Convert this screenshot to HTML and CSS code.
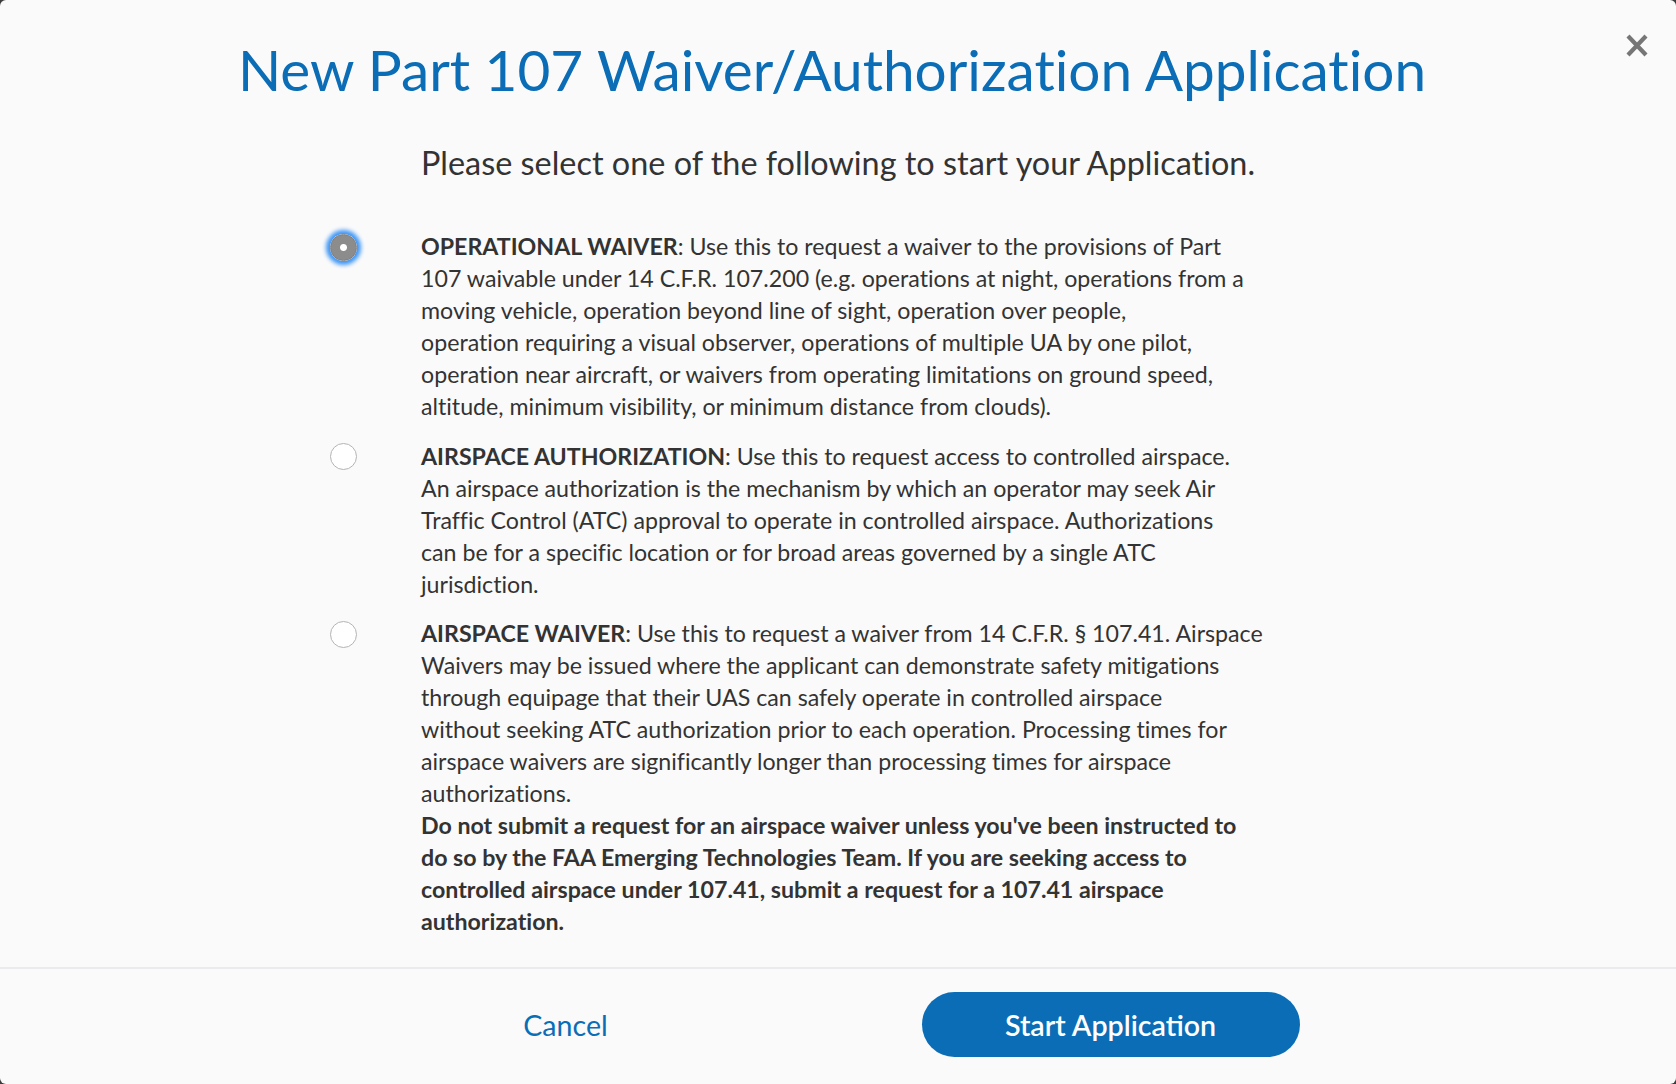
FILE: index.html
```html
<!DOCTYPE html>
<html lang="en">
<head>
    <meta charset="UTF-8">
    <title>New Part 107 Waiver/Authorization Application</title>
    <link rel="stylesheet" href="styles.css">
</head>
<body>
<div class="modal">
    <button class="close" aria-label="Close">
        <svg width="22" height="23" viewBox="0 0 22 23"><path d="M2 2 L20 21 M20 2 L2 21" stroke="#767676" stroke-width="4.2" fill="none"/></svg>
    </button>
    <div class="modal-body">
        <h1 class="title">New Part 107 Waiver/Authorization Application</h1>
        <p class="lead">Please select one of the following to start your Application.</p>

        <div class="options">
            <label class="option">
                <input type="radio" name="app-type" class="radio" checked>
                <span class="option-text"><b>OPERATIONAL WAIVER</b>: Use this to request a waiver to the provisions of Part<br>
                    107 waivable under 14 C.F.R. 107.200 (e.g. operations at night, operations from a<br>
                    moving vehicle, operation beyond line of sight, operation over people,<br>
                    operation requiring a visual observer, operations of multiple UA by one pilot,<br>
                    operation near aircraft, or waivers from operating limitations on ground speed,<br>
                    altitude, minimum visibility, or minimum distance from clouds).</span>
            </label>
            <label class="option">
                <input type="radio" name="app-type" class="radio">
                <span class="option-text"><b>AIRSPACE AUTHORIZATION</b>: Use this to request access to controlled airspace.<br>
                    An airspace authorization is the mechanism by which an operator may seek Air<br>
                    Traffic Control (ATC) approval to operate in controlled airspace. Authorizations<br>
                    can be for a specific location or for broad areas governed by a single ATC<br>
                    jurisdiction.</span>
            </label>
            <label class="option">
                <input type="radio" name="app-type" class="radio">
                <span class="option-text"><b>AIRSPACE WAIVER</b>: Use this to request a waiver from 14 C.F.R. § 107.41. Airspace<br>
                    Waivers may be issued where the applicant can demonstrate safety mitigations<br>
                    through equipage that their UAS can safely operate in controlled airspace<br>
                    without seeking ATC authorization prior to each operation. Processing times for<br>
                    airspace waivers are significantly longer than processing times for airspace<br>
                    authorizations.<br>
                    <b>Do not submit a request for an airspace waiver unless you've been instructed to<br>
                    do so by the FAA Emerging Technologies Team. If you are seeking access to<br>
                    controlled airspace under 107.41, submit a request for a 107.41 airspace<br>
                    authorization.</b></span>
            </label>
        </div>
    </div>
    <div class="modal-footer">
        <button class="btn btn-link">Cancel</button>
        <button class="btn btn-primary">Start Application</button>
    </div>
</div>
</body>
</html>
```

FILE: styles.css
```css
* { box-sizing: border-box; }
body {
    margin: 0;
    background: #3c3c3c;
    font-family: 'Lato', sans-serif;
    font-variant-ligatures: none;
    color: #333;
}
.modal {
    height: 100vh;
    background: #fafafa;
    border-radius: 6px;
    position: relative;
    display: flex;
    flex-direction: column;
}
.close {
    position: absolute;
    top: 34px;
    right: 28px;
    padding: 0;
    border: 0;
    background: none;
    line-height: 0;
    cursor: pointer;
}
.modal-body { flex: 1; padding-top: 29px; }
.title {
    margin: 0;
    padding-right: 12px;
    text-align: center;
    font-weight: 400;
    font-size: 56.7px;
    line-height: 80px;
    color: #0a6db6;
}
.lead {
    margin: 34px 0 0;
    text-align: center;
    font-size: 32.4px;
    line-height: 40px;
}
.options {
    width: 1016px;
    margin: 47px auto 0;
}
.option {
    display: flex;
    margin-bottom: 17.5px;
    cursor: pointer;
}
.radio {
    appearance: none;
    -webkit-appearance: none;
    flex: none;
    width: 27px;
    height: 27px;
    margin: 3.5px 64px 0 0;
    border-radius: 50%;
    border: 1px solid #b4b4b4;
    background: #fff;
}
.radio:checked {
    border-color: #7d7d7d;
    background: radial-gradient(circle, #fff 0 3px, #8c8c8c 4px);
    box-shadow: 0 0 4px 4px #3d95f5;
}
.option-text {
    width: 880px;
    font-size: 23.2px;
    line-height: 32px;
}
.option-text b { font-weight: 700; }
.modal-footer {
    height: 117px;
    padding-bottom: 4px;
    border-top: 2px solid #eaeaef;
    display: flex;
    justify-content: center;
    align-items: center;
    gap: 167px;
}
.btn {
    width: 378px;
    height: 65px;
    border: 0;
    border-radius: 33px;
    font-family: inherit;
    font-size: 28.6px;
    cursor: pointer;
}
.btn-link { background: none; color: #0a6db6; }
.btn-primary { background: #0a6db5; color: #fff; font-weight: 600; }
```
